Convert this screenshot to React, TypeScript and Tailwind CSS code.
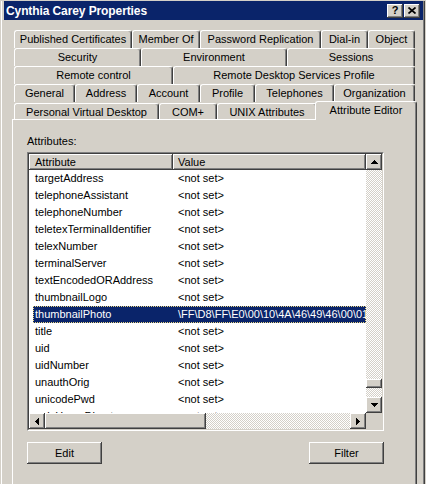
import clsx from 'clsx';

const raised =
  'bg-[#d4d0c8] shadow-[inset_-1px_-1px_#404040,inset_1px_1px_#ffffff,inset_-2px_-2px_#808080]';
const hatch =
  'bg-[repeating-conic-gradient(#d4d0c8_0%_25%,#ffffff_0%_50%)] bg-[length:2px_2px]';
const tabEdge =
  'bg-[#d4d0c8] border-l border-t border-r border-l-white border-t-white border-r-[#404040] rounded-t-[3px] shadow-[inset_-1px_0_#808080]';

type Tab = { label: string; w: number };

const tabRows: Tab[][] = [
  [
    { label: 'Published Certificates', w: 118 },
    { label: 'Member Of', w: 68 },
    { label: 'Password Replication', w: 121 },
    { label: 'Dial-in', w: 47 },
    { label: 'Object', w: 47 },
  ],
  [
    { label: 'Security', w: 127 },
    { label: 'Environment', w: 146 },
    { label: 'Sessions', w: 128 },
  ],
  [
    { label: 'Remote control', w: 159 },
    { label: 'Remote Desktop Services Profile', w: 242 },
  ],
  [
    { label: 'General', w: 61 },
    { label: 'Address', w: 62 },
    { label: 'Account', w: 63 },
    { label: 'Profile', w: 55 },
    { label: 'Telephones', w: 79 },
    { label: 'Organization', w: 81 },
  ],
];

const frontRow: Tab[] = [
  { label: 'Personal Virtual Desktop', w: 145 },
  { label: 'COM+', w: 58 },
  { label: 'UNIX Attributes', w: 100 },
];

const NOT_SET = '<not set>';

const attributes: { name: string; value: string; selected?: boolean }[] = [
  { name: 'targetAddress', value: NOT_SET },
  { name: 'telephoneAssistant', value: NOT_SET },
  { name: 'telephoneNumber', value: NOT_SET },
  { name: 'teletexTerminalIdentifier', value: NOT_SET },
  { name: 'telexNumber', value: NOT_SET },
  { name: 'terminalServer', value: NOT_SET },
  { name: 'textEncodedORAddress', value: NOT_SET },
  { name: 'thumbnailLogo', value: NOT_SET },
  {
    name: 'thumbnailPhoto',
    value: String.raw`\FF\D8\FF\E0\00\10\4A\46\49\46\00\01\01\01\00\60\00\60`,
    selected: true,
  },
  { name: 'title', value: NOT_SET },
  { name: 'uid', value: NOT_SET },
  { name: 'uidNumber', value: NOT_SET },
  { name: 'unauthOrig', value: NOT_SET },
  { name: 'unicodePwd', value: NOT_SET },
  { name: 'unixHomeDirectory', value: NOT_SET },
];

function Arrow({ dir }: { dir: 'up' | 'down' | 'left' | 'right' }) {
  const pts = {
    up: '3.5,0 7,4 0,4',
    down: '0,0 7,0 3.5,4',
    left: '4,0 4,7 0,3.5',
    right: '0,0 4,3.5 0,7',
  }[dir];
  const vertical = dir === 'up' || dir === 'down';
  return (
    <svg width={vertical ? 7 : 4} height={vertical ? 4 : 7} viewBox={vertical ? '0 0 7 4' : '0 0 4 7'}>
      <polygon points={pts} fill="#000" shapeRendering="crispEdges" />
    </svg>
  );
}

function ScrollButton({ dir }: { dir: 'up' | 'down' | 'left' | 'right' }) {
  return (
    <div className={clsx(raised, 'w-[16px] h-[16px] shrink-0 flex items-center justify-center')}>
      <Arrow dir={dir} />
    </div>
  );
}

function TitleButton({ children }: { children: React.ReactNode }) {
  return (
    <div className={clsx(raised, 'w-[16px] h-[14px] flex items-center justify-center')}>{children}</div>
  );
}

function TabCell({ tab, className }: { tab: Tab; className?: string }) {
  return (
    <div
      className={clsx(tabEdge, 'shrink-0 flex items-center justify-center whitespace-nowrap', className)}
      style={{ width: tab.w }}
    >
      {tab.label}
    </div>
  );
}

function AttributeRow({ name, value, selected }: { name: string; value: string; selected?: boolean }) {
  return (
    <div className="h-[17px] pl-[4px] flex shrink-0">
      <div
        className={clsx(
          'flex w-full items-center',
          selected && 'bg-[#0a246a] text-white outline-1 outline-dotted outline-[#e8d480] -outline-offset-1'
        )}
      >
        <div className="w-[140px] shrink-0 pl-[2px] whitespace-nowrap overflow-hidden">{name}</div>
        <div className="flex-1 min-w-0 pl-[5px] whitespace-nowrap overflow-hidden">{value}</div>
      </div>
    </div>
  );
}

export default function App() {
  return (
    <div className="w-[426px] h-[484px] bg-[#d4d0c8] pt-[1px] overflow-hidden font-['Liberation_Sans',Arial,sans-serif] text-[11px] text-black">
      <div className="ml-[1px] w-[424px] h-[484px] border-l border-white border-r border-r-[#404040] shadow-[inset_-1px_0_#808080] pl-[2px]">
        {/* Title bar */}
        <div className="h-[19px] mr-[1px] bg-[#0a246a] flex items-center pl-[2px] pr-[3px]">
          <span className="text-white font-bold text-[12px] tracking-[-0.1px]">Cynthia Carey Properties</span>
          <div className="ml-auto flex gap-[1px]">
            <TitleButton>
              <span className="font-bold text-[11px] leading-none">?</span>
            </TitleButton>
            <TitleButton>
              <svg width="8" height="7" viewBox="0 0 8 7">
                <path d="M0.5 0.5 L7.5 6.5 M7.5 0.5 L0.5 6.5" stroke="#000" strokeWidth="1.7" />
              </svg>
            </TitleButton>
          </div>
        </div>

        {/* Tabs */}
        <div className="mt-[10px] ml-[10px]">
          {tabRows.map((row, i) => (
            <div key={i} className="flex h-[18px]">
              {row.map((t) => (
                <TabCell key={t.label} tab={t} className="h-[18px]" />
              ))}
            </div>
          ))}
          <div className="flex h-[17px] items-end">
            {frontRow.map((t) => (
              <TabCell key={t.label} tab={t} className="h-[16px] pt-[1px]" />
            ))}
            <div
              className={clsx(
                tabEdge,
                'relative top-[1px] z-10 -ml-[2px] w-[102px] h-[19px] flex items-center justify-center whitespace-nowrap pb-[1px]'
              )}
            >
              Attribute Editor
            </div>
          </div>
        </div>

        {/* Panel */}
        <div className="ml-[8px] w-[405px] h-[400px] border-l border-t border-white border-r border-r-[#404040] shadow-[inset_-1px_0_#808080] pl-[14px]">
          <div className="mt-[14px] h-[14px] leading-[14px]">Attributes:</div>

          <div className="mt-[4px] w-[357px] h-[279px] border border-t-[#808080] border-l-[#808080] border-b-white border-r-white">
            <div className="w-full h-full border border-t-[#404040] border-l-[#404040] border-b-[#d4d0c8] border-r-[#d4d0c8] bg-white flex flex-col">
              <div className="flex h-[259px]">
                <div className="w-[337px] h-[259px] overflow-hidden flex flex-col">
                  <div className="flex h-[16px] shrink-0">
                    <div className={clsx(raised, 'w-[144px] pl-[6px] flex items-center')}>Attribute</div>
                    <div className={clsx(raised, 'flex-1 pl-[5px] flex items-center')}>Value</div>
                  </div>
                  {attributes.map((a) => (
                    <AttributeRow key={a.name} {...a} />
                  ))}
                </div>
                <div className="w-[16px] flex flex-col">
                  <ScrollButton dir="up" />
                  <div className={clsx(hatch, 'h-[209px]')} />
                  <div className={clsx(raised, 'h-[9px]')} />
                  <div className={clsx(hatch, 'flex-1')} />
                  <ScrollButton dir="down" />
                </div>
              </div>
              <div className="flex h-[16px]">
                <ScrollButton dir="left" />
                <div className={clsx(raised, 'w-[161px]')} />
                <div className={clsx(hatch, 'flex-1')} />
                <ScrollButton dir="right" />
                <div className="w-[16px] bg-[#d4d0c8]" />
              </div>
            </div>
          </div>

          <div className="mt-[11px] w-[357px] flex justify-between">
            <button className={clsx(raised, 'w-[75px] h-[22px] flex items-center justify-center')}>Edit</button>
            <button className={clsx(raised, 'w-[75px] h-[22px] flex items-center justify-center')}>Filter</button>
          </div>
        </div>
      </div>
    </div>
  );
}
